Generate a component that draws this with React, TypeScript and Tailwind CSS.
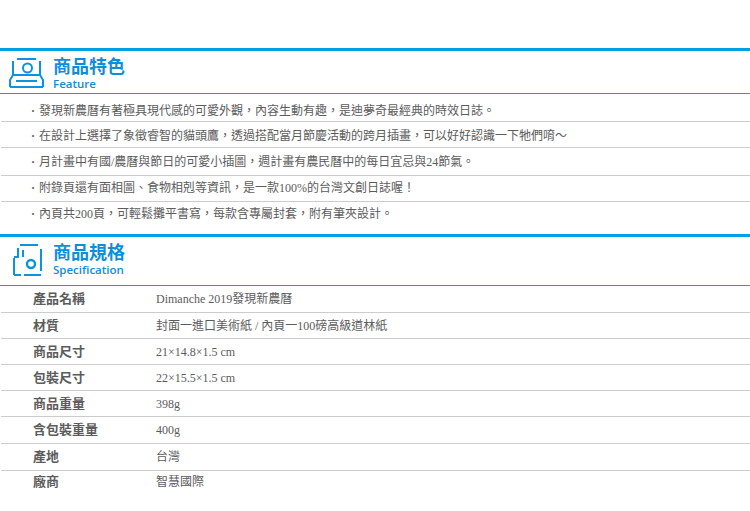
const features = [
  { text: "發現新農曆有著極具現代感的可愛外觀，內容生動有趣，是迪夢奇最經典的時效日誌。", box: "h-[28px] pt-[9px]" },
  { text: "在設計上選擇了象徵睿智的貓頭鷹，透過搭配當月節慶活動的跨月插畫，可以好好認識一下牠們唷～", box: "h-[26px] pt-[6px]" },
  { text: "月計畫中有國/農曆與節日的可愛小插圖，週計畫有農民曆中的每日宜忌與24節氣。", box: "h-[28px] pt-[6px]" },
  { text: "附錄頁還有面相圖、食物相剋等資訊，是一款100%的台灣文創日誌喔！", box: "h-[26px] pt-[4px]" },
  { text: "內頁共200頁，可輕鬆攤平書寫，每款含專屬封套，附有筆夾設計。", box: "h-[32px] pt-[4px]" },
];

const specs = [
  { label: "產品名稱", value: "Dimanche 2019發現新農曆", box: "h-[27px] pt-[5px]" },
  { label: "材質", value: "封面一進口美術紙 / 內頁一100磅高級道林紙", box: "h-[26px] pt-[5px]" },
  { label: "商品尺寸", value: "21×14.8×1.5 cm", box: "h-[26px] pt-[5px]" },
  { label: "包裝尺寸", value: "22×15.5×1.5 cm", box: "h-[26px] pt-[5px]" },
  { label: "商品重量", value: "398g", box: "h-[26px] pt-[5px]" },
  { label: "含包裝重量", value: "400g", box: "h-[27px] pt-[5px]" },
  { label: "產地", value: "台灣", box: "h-[27px] pt-[5px]" },
  { label: "廠商", value: "智慧國際", box: "h-[26px] pt-[3px]" },
];

function FeatureIcon() {
  return (
    <svg width="36" height="31" viewBox="0 0 36 31" fill="none" stroke="#0b93dd" strokeWidth="2">
      <path d="M8 1h19M4 3v15M31 3v15M4 17h27M4 17l-3 5v7M31 17l3 5v7M1 29h33M7 23h21" />
      <circle cx="18.5" cy="10" r="4.5" />
    </svg>
  );
}

function SpecIcon() {
  return (
    <svg className="ml-[3px]" width="32" height="33" viewBox="0 0 32 33" fill="none" stroke="#0b93dd" strokeWidth="2">
      <path d="M8 1h18M2 14v17M2 31h7M12 31h17M29 5v22M6 4v9H2M11 6v7" />
      <circle cx="19" cy="20" r="4" strokeWidth="2.4" />
    </svg>
  );
}

function SectionHeader({ title, sub, icon, box }: { title: string; sub: string; icon: React.ReactNode; box: string }) {
  return (
    <>
      <div className={`flex items-start pt-[6px] pl-[9px] ${box}`}>
        <div className="w-[44px] pt-px">{icon}</div>
        <div className="flex flex-col">
          <span className="text-[18px] leading-[20px] font-bold text-[#0b8fdc]">{title}</span>
          <span className="font-['Open_Sans'] text-[11.5px] leading-[13px] font-semibold text-[#0b8fdc]">{sub}</span>
        </div>
      </div>
      <div className="h-px bg-[#1b9ce0]" />
    </>
  );
}

export default function App() {
  return (
    <div className="min-h-[511px] bg-white pt-[48px] font-['Liberation_Serif','Noto_Sans_CJK_TC',serif] text-[12px] leading-[16px] text-[#5c5c5c]">
      <div className="h-[3px] bg-[#00a0e9]" />
      <SectionHeader title="商品特色" sub="Feature" icon={<FeatureIcon />} box="h-[42px]" />
      <ul>
        {features.map((item, i) => (
          <li
            key={item.text}
            className={`ml-px flex pl-[30px] ${item.box} ${i < features.length - 1 ? "border-b border-[#ccc]" : ""}`}
          >
            <span className="w-[8px] font-bold">·</span>
            {item.text}
          </li>
        ))}
      </ul>
      <div className="h-[3px] bg-[#00a0e9]" />
      <SectionHeader title="商品規格" sub="Specification" icon={<SpecIcon />} box="h-[48px]" />
      <div>
        {specs.map((row, i) => (
          <div
            key={row.label}
            className={`ml-px flex pl-[32px] ${row.box} ${i < specs.length - 1 ? "border-b border-[#ccc]" : ""}`}
          >
            <span className="w-[123px] text-[13px] font-bold">{row.label}</span>
            <span>{row.value}</span>
          </div>
        ))}
      </div>
    </div>
  );
}
